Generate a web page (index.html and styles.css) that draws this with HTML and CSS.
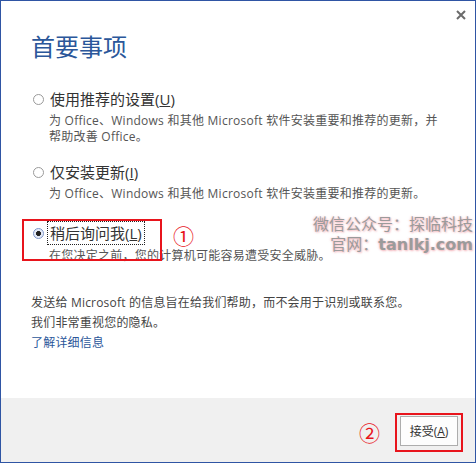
FILE: index.html
```html
<!DOCTYPE html>
<html lang="zh-CN">
<head>
<meta charset="utf-8">
<link rel="stylesheet" href="styles.css">
</head>
<body>
<div class="dialog">
  <div class="topbar">
    <span class="close" aria-label="关闭">
      <svg width="10" height="10" viewBox="0 0 10 10"><path d="M1 1L9 9M9 1L1 9" stroke="#6b6b6b" stroke-width="2"/></svg>
    </span>
  </div>
  <div class="main">
    <h1 class="title">首要事项</h1>
    <div class="options">
      <div class="option opt1">
        <div class="opt-row"><span class="radio"></span><span class="label">使用推荐的设置(<u>U</u>)</span></div>
        <div class="desc">为 Office、Windows 和其他 Microsoft 软件安装重要和推荐的更新，并<br>帮助改善 Office。</div>
      </div>
      <div class="option opt2">
        <div class="opt-row"><span class="radio"></span><span class="label">仅安装更新(<u>I</u>)</span></div>
        <div class="desc">为 Office、Windows 和其他 Microsoft 软件安装重要和推荐的更新。</div>
      </div>
      <div class="option opt3">
        <div class="opt-row"><span class="radio checked"></span><span class="label focus">稍后询问我(<u>L</u>)</span></div>
        <div class="desc">在您决定之前，您的计算机可能容易遭受安全威胁。</div>
        <div class="mark mark1"></div>
        <div class="num num1">①</div>
      </div>
    </div>
    <div class="privacy">
      <p>发送给 Microsoft 的信息旨在给我们帮助，而不会用于识别或联系您。</p>
      <p>我们非常重视您的隐私。</p>
      <p><a class="link" href="#">了解详细信息</a></p>
    </div>
    <div class="watermark">
      <div>微信公众号：探临科技</div>
      <div class="wm2">官网：<b>tanlkj.com</b></div>
    </div>
  </div>
  <div class="footer">
    <span class="num num2">②</span>
    <div class="btn-wrap">
      <button class="btn">接受(<u>A</u>)</button>
    </div>
  </div>
</div>
</body>
</html>
```

FILE: styles.css
```css
html, body {
  margin: 0;
  padding: 0;
  background: #fff;
}
body {
  font-family: "Open Sans", "Noto Sans CJK SC", "Microsoft YaHei", sans-serif;
  color: #444;
}
.dialog {
  width: 476px;
  height: 463px;
  box-sizing: border-box;
  border: 1px solid #2f55a4;
  display: flex;
  flex-direction: column;
  background: #fff;
}
.topbar {
  height: 28px;
  display: flex;
  justify-content: flex-end;
  align-items: center;
  padding-right: 9px;
}
.close {
  width: 10px;
  height: 10px;
  display: block;
  margin-top: -1px;
}
.close svg { display: block; }
.main {
  flex: 1;
  position: relative;
  padding: 0 0 0 30px;
}
.title {
  margin: 0;
  font-family: "Noto Sans CJK SC", sans-serif;
  font-size: 24px;
  font-weight: normal;
  color: #2b579a;
  line-height: 34px;
}
.options {
  margin-top: 25px;
  display: flex;
  flex-direction: column;
  gap: 16px;
}
.opt3 {
  margin-top: 4px;
}
.option {
  position: relative;
}
.opt-row {
  display: flex;
  align-items: center;
  height: 22px;
}
.radio {
  width: 11px;
  height: 11px;
  box-sizing: border-box;
  border: 1px solid #9a9a9a;
  border-radius: 50%;
  margin-left: 2px;
  margin-right: 5px;
  background: #fff;
  flex: none;
}
.radio.checked {
  border-color: #7b93c9;
  background: radial-gradient(circle, #222 0 2.2px, #dfe6f5 2.8px, #f4f6fb 100%);
}
.label {
  font-size: 15px;
  color: #333;
  line-height: 20px;
  padding: 0 1px;
}
.label.focus {
  outline: 1px dotted #222;
  outline-offset: 1px;
}
.desc {
  margin-left: 18px;
  margin-top: 3px;
  font-size: 12px;
  line-height: 16px;
  color: #555;
  letter-spacing: 0.25px;
}
.opt3 .desc { margin-top: 4px; }
.mark {
  position: absolute;
  border: 2px solid #e8141c;
}
.mark1 {
  left: -9px;
  top: -3px;
  width: 136px;
  height: 38px;
}
.num {
  color: #e8141c;
  font-family: "Noto Sans CJK SC", sans-serif;
  font-size: 21px;
  line-height: 20px;
}
.num1 {
  position: absolute;
  left: 142px;
  top: 5px;
  line-height: 16px;
}
.privacy {
  margin-top: 29px;
  font-size: 12px;
  color: #444;
  letter-spacing: 0.2px;
}
.privacy p {
  margin: 0;
  line-height: 20px;
}
.link {
  color: #2b579a;
  text-decoration: none;
}
.watermark {
  position: absolute;
  right: 2px;
  top: 184px;
  text-align: right;
  font-family: "Noto Sans CJK SC", sans-serif;
  font-size: 16px;
  line-height: 20px;
  color: #9b9b9b;
  text-shadow: 1px 1px 2px rgba(235, 130, 140, 0.55), -1px 0 2px rgba(235, 130, 140, 0.35);
}
.wm2 b {
  font-family: "DejaVu Sans", sans-serif;
  font-weight: bold;
  font-size: 16px;
}
.footer {
  height: 64px;
  background: #f0f0f0;
  display: flex;
  justify-content: flex-end;
  align-items: center;
  padding-right: 12px;
  gap: 15px;
}
.num2 {
  margin-top: 4px;
}
.btn-wrap {
  border: 2px solid #e8141c;
  padding: 1px 3px 4px 3px;
  margin-top: 4px;
}
.btn {
  display: block;
  width: 58px;
  height: 30px;
  box-sizing: border-box;
  border: 1px solid #adadad;
  background: #fdfdfd;
  font-family: "Open Sans", "Noto Sans CJK SC", sans-serif;
  font-size: 12px;
  color: #333;
  padding: 0;
}
```
